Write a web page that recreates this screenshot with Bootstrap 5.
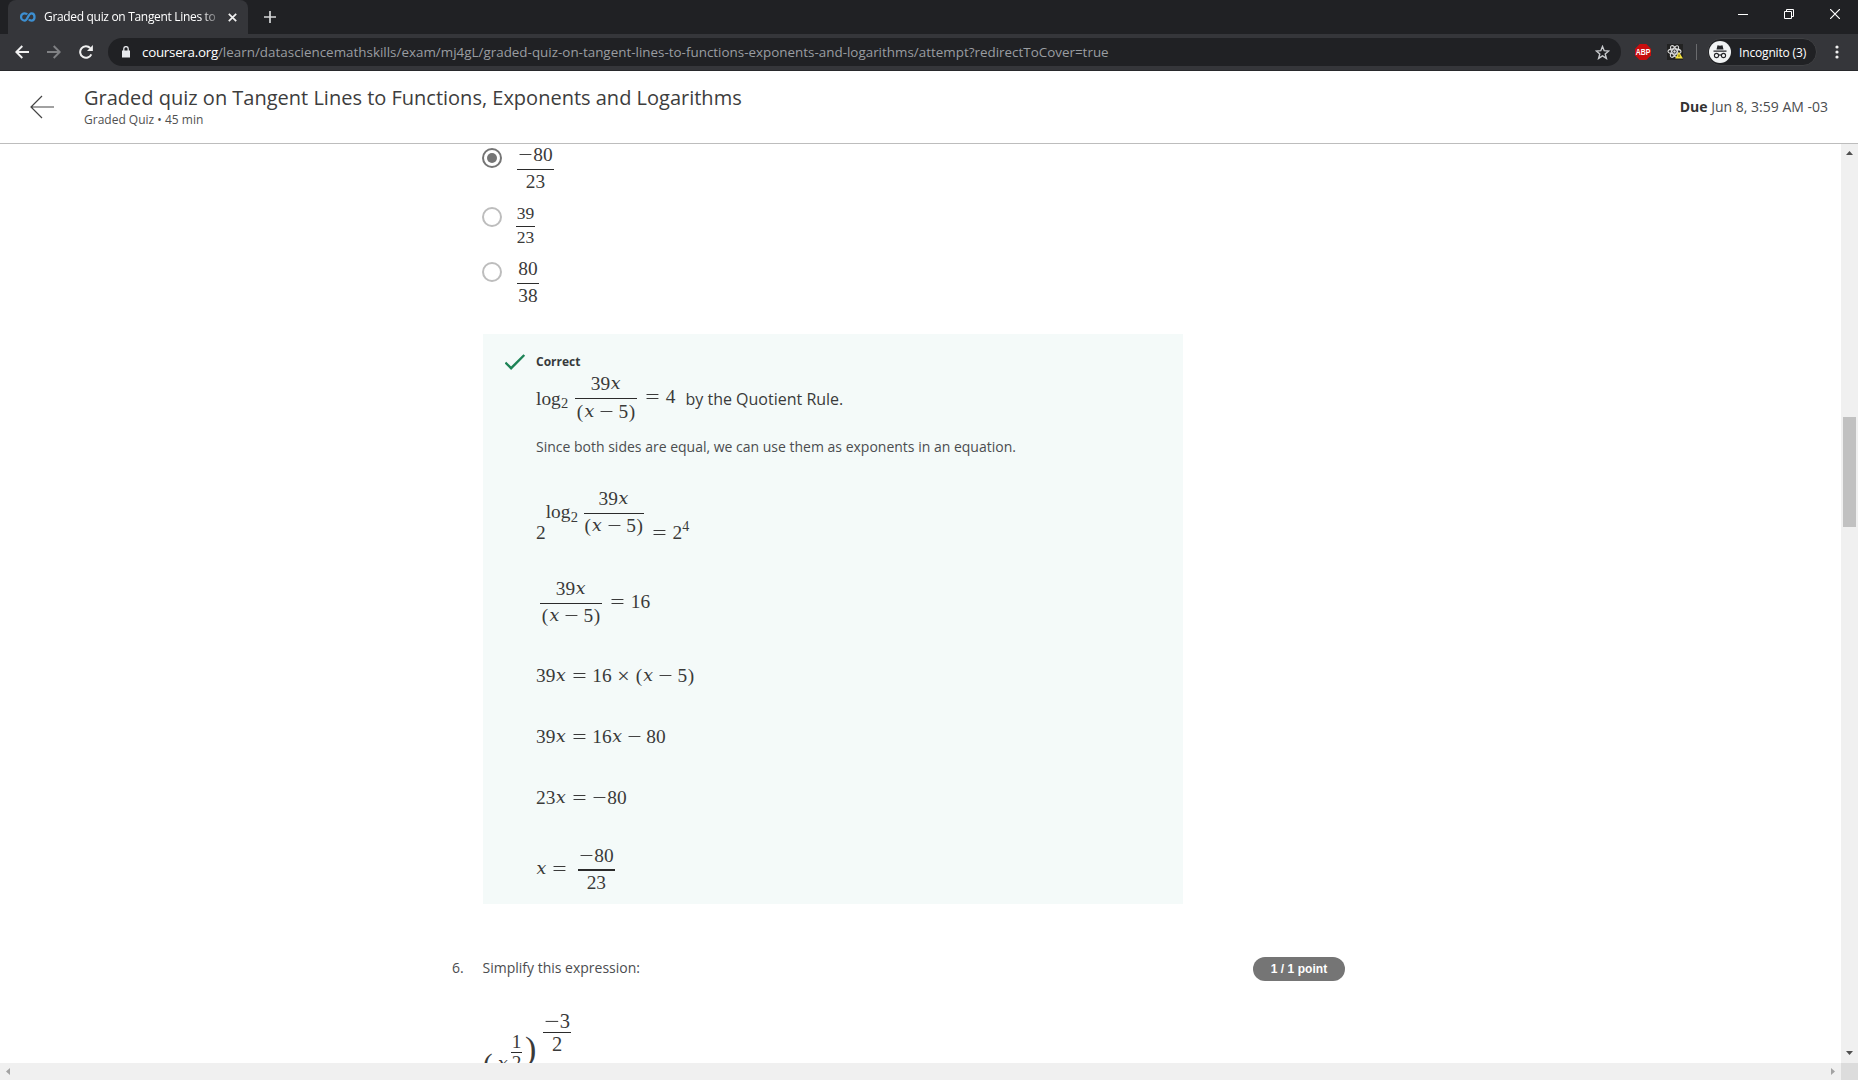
<!DOCTYPE html>
<html lang="en">
<head>
<meta charset="utf-8">
<title>Graded quiz on Tangent Lines to Functions, Exponents and Logarithms</title>
<link href="https://cdn.jsdelivr.net/npm/bootstrap@5.3.0/dist/css/bootstrap.min.css" rel="stylesheet">
<style>
body{font-family:"Open Sans",sans-serif;font-size:14px;line-height:19px;color:#4b4d4f;width:1858px;height:1080px;overflow:hidden;background:#fff}
svg{display:block;flex:none}
.nw{white-space:nowrap}
/* browser frame */
.tabstrip{height:34px;background:#202124;padding-left:8px}
.tab-on{width:240px;height:34px;background:#35363a;border-radius:8px 8px 0 0;padding-left:12px}
.tab-name{width:173px;margin-left:8px;margin-top:-1px;font-size:12px;letter-spacing:-.32px;color:#fff;overflow:hidden;-webkit-mask-image:linear-gradient(90deg,#000 158px,transparent 178px)}
.tab-x{margin-left:11px}
.new-tab{margin-left:16px}
.win-btns{height:28px;gap:36px;padding-right:18px}
.toolbar{height:37px;background:#35363a;padding:4px 0 4px 15px;border-bottom:1px solid #28292c}
.nav-ic{margin-left:18px}
.omni{width:1513px;height:28px;border-radius:14px;background:#202124;margin-left:15px;padding:0 11px 0 14px}
.url{font-size:13.4px;color:#9a9da1;margin-left:12px;letter-spacing:.01px}
.url b{font-weight:400;color:#fff;letter-spacing:-.28px}
.abp{width:16px;height:16px;margin-left:14px}
.tool-sep{width:1px;height:16px;background:#6a6b6e;margin-left:13px}
.incog{width:110px;height:28px;border-radius:14px;background:#202124;border:1px solid #3f4043;margin-left:10px;padding-left:1px;color:#fff;font-size:12px;letter-spacing:-.16px}
/* page header */
.quiz-head{height:73px;border-bottom:1px solid #bdbdbd;padding:0 30px}
.quiz-names{margin-left:29px;margin-top:-3px}
.quiz-title{font-size:20px;line-height:27px;margin:0;font-weight:400;color:#3d3d3d}
.quiz-meta{font-size:12px;line-height:17px;color:#505050}
.due{margin-top:-2px}
.due b{color:#333}
/* scrolled pane */
.pane{height:919px;overflow:hidden}
.col-main{width:893px;margin-left:452px}
.opts{padding-left:30px}
.opt{height:60px}
.opt.o2{height:54px}
.opt.o3{height:76px}
.dot{width:20px;height:20px;border:2px solid #bdbdbd;border-radius:50%;margin:3px 15px 0 0;flex:none}
.o1 .dot,.o3 .dot{margin-top:4px}
.dot.on{border-color:#757575;padding:3px}
.dot.on::before{content:"";display:block;width:10px;height:10px;border-radius:50%;background:#757575}
.feedback{width:700px;height:570px;margin-left:31px;background:#f4faf9;padding:19px 0 0 22px}
.feedback .tick{width:31px;padding-top:1px}
.verdict{font-size:12px;line-height:17px;font-weight:700;color:#373a3c}
/* math */
.fx{font-family:"Liberation Serif",serif;font-size:19.36px;line-height:21px;color:#3a3a3a;display:flex;align-items:flex-start;white-space:nowrap}
.fx span,.fx i{display:inline-block;flex:none}
.fx i{font-family:"DejaVu Serif",serif;font-size:.9em;width:.635em;line-height:inherit;text-align:center}
.fx .rel,.fx .bin,.fx .neg{width:.778em;text-align:center;transform:scaleX(1.32)}
.fx .rel{margin:0 .278em}
.fx .bin{margin:0 .222em}
.fx .tms{transform:none;font-size:22px;width:.685em;margin:0 .195em}
.fx .par{width:.389em;text-align:center}
.fx .fr{display:flex;flex-direction:column;align-items:center;--a:4px;--b:2px}
.fx .fr>span{display:flex}
.fx .fr::before{content:"";order:2;align-self:stretch;border-top:var(--w,1px) solid #2b2b2b;margin:var(--a) 0 var(--b)}
.fx .fr>span:first-child{order:1}
.fx .fr>span:last-child{order:3}
.fx .sub{font-size:14.5px;line-height:15px}
.fx .sup{font-size:14px;line-height:15px}
.opt .fr{--a:3px;--b:1px}
.o1 .fr{--a:4px}
.o3 .fr{--a:4px}
.f80{width:37px}
.o2 .fx{font-size:17.5px;line-height:19px;margin-left:-1px}
.f39{width:19px}.f38{width:22px}
.ra{height:67px}
.ra .lg{margin-top:18px;width:25px}.ra .sub{margin-top:26px;width:7px}
.ra .fr{margin:3px 2px 0 7px;width:62px}
.ra .eq{margin:16px 0 0 1px}
.ra .txt{font:16px/22px "Open Sans",sans-serif;margin:18px 0 0 10px}
.rb{height:112px}
.rb .base{margin-top:66px}.rb .lg{margin:45px 0 0;width:25px}.rb .sub{margin:54px 6px 0 0;width:7px}
.rb .fr{margin-top:32px;width:60px;--b:1px}
.rb .eq{margin-left:3px}
.rb .sup{margin-top:63px}
.rc{height:97px}
.rc .fr{margin:10px 2px 0 4px;width:62px;--b:1px}
.rc .eq{margin:23px 0 0 1px}
.rd{height:61px}.rf{height:58px}
.rg{height:59px}
.rg .lead-x{margin-top:13px}
.rg .fr{margin-left:5px;width:37px;--a:3px;--b:1px;--w:2px}
.q6{padding-top:53px}
.q6 .qn{width:30.500px;padding-top:1px}
.q6 .qt{padding-top:1px}
.pts{width:92px;height:24px;border-radius:12px;background:#757575;color:#fff;text-align:center;letter-spacing:.05px;font:700 12px/24px "Liberation Sans",sans-serif}
.r6{margin-left:31px;height:90px}
.r6 .p1{font-size:29px;line-height:32px;margin-top:67px;width:10px}
.r6 .bx{margin:72px 0 0 3px;width:14px}
.r6 .half{margin-top:50px;width:11px;--a:0px;--b:0px;margin-left:1px}
.r6 .half>span:last-child{margin-top:-1px}
.r6 .p2{font-size:34px;line-height:38px;margin:49px 0 0 3px;width:12px}
.r6 .ex{font-size:20.5px;line-height:22px;margin:29px 0 0 6px;width:28px;--a:0px;--b:0px}
.vbar{width:17px;height:919px;background:#f0f0f0;padding:7px 0 8px}
.vthumb{width:13px;height:110px;margin:262px auto 0;background:#c1c1c1}
.hbar{height:17px;background:#f0f0f0}
.hbar svg{margin:0 6px}
.corner{width:17px;height:17px;background:#dcdcdc}
</style>
</head>
<body>
<!-- tab strip -->
<div class="tabstrip d-flex align-items-center">
  <div class="tab-on d-flex align-items-center">
    <svg width="16" height="10" viewBox="0 0 16 10" fill="none" stroke="#3d8fd1" stroke-width="2.3"><path d="M7.2 2.4C6.5 1.5 5.6 1.3 4.7 1.3a3.6 3.6 0 0 0 0 7.3c2.9 0 3.4-7.3 6.8-7.3 4 0 4 7.3 0 7.3-1 0-2-.4-2.600-1.300"/></svg>
    <div class="tab-name nw">Graded quiz on Tangent Lines to</div>
    <svg class="tab-x" width="9" height="9" viewBox="0 0 9 9" stroke="#f1f1f1" stroke-width="1.7"><path d="M.8.8l7.400 7.400M8.200.8L.8 8.200"/></svg>
  </div>
  <svg class="new-tab" width="12" height="12" viewBox="0 0 12 12" stroke="#d5d6d8" stroke-width="1.7"><path d="M6 0v12M0 6h12"/></svg>
  <div class="win-btns d-flex ms-auto align-items-center align-self-start">
    <svg width="10" height="10" viewBox="0 0 10 10" stroke="#fff"><path d="M0 5.500h10"/></svg>
    <svg width="10" height="10" viewBox="0 0 10 10" fill="none" stroke="#fff"><path d="M.5 2.500h7v7h-7zM2.500 2.500v-2h7v7h-2"/></svg>
    <svg width="10" height="10" viewBox="0 0 10 10" stroke="#fff" stroke-width="1.200"><path d="M0 0l10 10M10 0L0 10"/></svg>
  </div>
</div>
<!-- toolbar -->
<div class="toolbar d-flex align-items-center">
  <svg width="14" height="14" viewBox="0 0 14 14" fill="none" stroke="#f1f1f1" stroke-width="1.900"><path d="M14 7H1.500M7.300 1L1.300 7l6 6"/></svg>
  <svg class="nav-ic" width="14" height="14" viewBox="0 0 14 14" fill="none" stroke="#808184" stroke-width="1.900"><path d="M0 7h12.500M6.700 1l6 6-6 6"/></svg>
  <svg class="nav-ic" width="14" height="14" viewBox="0 0 14 14" fill="none" stroke="#f1f1f1" stroke-width="2"><path d="M12.300 9.300A5.800 5.800 0 1 1 11.200 3"/><path d="M13.900 0v6H8z" fill="#f1f1f1" stroke="none"/></svg>
  <div class="omni d-flex align-items-center">
    <svg width="8" height="12" viewBox="0 0 8 12"><path d="M0 4.500h8v7H0z" fill="#e8eaed"/><path d="M1.800 5V2.800a2.200 2.200 0 0 1 4.400 0V5" fill="none" stroke="#e8eaed" stroke-width="1.300"/></svg>
    <div class="url nw"><b>coursera.org</b>/learn/datasciencemathskills/exam/mj4gL/graded-quiz-on-tangent-lines-to-functions-exponents-and-logarithms/attempt?redirectToCover=true</div>
    <svg class="ms-auto" width="15" height="15" viewBox="0 0 15 15" fill="none" stroke="#c9cbce" stroke-width="1.400"><path d="M7.500 1.500l1.700 4.200 4.500.3-3.500 2.900 1.200 4.500-3.900-2.500-3.900 2.500 1.200-4.500L1.300 6l4.500-.3z"/></svg>
  </div>
  <svg class="abp" viewBox="0 0 16 16"><path d="M4.700 0h6.600L16 4.700v6.600L11.300 16H4.700L0 11.300V4.700z" fill="#c70d0e"/><text x="8" y="11" text-anchor="middle" textLength="14.500" lengthAdjust="spacingAndGlyphs" font-family="Liberation Sans" font-weight="700" font-size="8.500" fill="#fff">ABP</text></svg>
  <svg class="ms-3" width="16" height="16" viewBox="0 0 16 16"><path d="M0 0h16v16H0z" fill="#222"/><g fill="none" stroke="#ddd" stroke-width="1.100"><ellipse cx="7.500" cy="7.500" rx="6.500" ry="2.600"/><ellipse cx="7.500" cy="7.500" rx="6.500" ry="2.600" transform="rotate(60 7.500 7.500)"/><ellipse cx="7.500" cy="7.500" rx="6.500" ry="2.600" transform="rotate(120 7.500 7.500)"/></g><circle cx="7.500" cy="7.500" r="1.200" fill="#ddd"/><path d="M12 8l4 6.500H8.200z" fill="#f4e23c"/><path d="M12 10.500v2.500" stroke="#6b5a00"/></svg>
  <div class="tool-sep"></div>
  <div class="incog d-flex align-items-center">
    <svg width="22" height="22" viewBox="0 0 22 22"><circle cx="11" cy="11" r="11" fill="#f1f3f4"/><path d="M7.500 8.500l1-4.300 2.500.5 2.500-.5 1 4.300zM4.500 9.500h13v1.200h-13z" fill="#25262a"/><g fill="none" stroke="#25262a" stroke-width="1.100"><circle cx="7.500" cy="14.500" r="2.100"/><circle cx="14.500" cy="14.500" r="2.100"/><path d="M9.600 14.200q1.400-.7 2.800 0"/></g></svg>
    <span class="nw ms-2">Incognito (3)</span>
  </div>
  <svg class="nav-ic" width="4" height="14" viewBox="0 0 4 14" fill="#f1f1f1"><circle cx="2" cy="2" r="1.600"/><circle cx="2" cy="7" r="1.600"/><circle cx="2" cy="12" r="1.600"/></svg>
</div>
<!-- quiz header -->
<header class="quiz-head d-flex align-items-center">
  <svg width="25" height="24" viewBox="0 0 25 24" fill="none" stroke="#444" stroke-width="1.200"><path d="M24 12H1M12 1L1 12l11 11"/></svg>
  <div class="quiz-names">
    <h1 class="quiz-title nw">Graded quiz on Tangent Lines to Functions, Exponents and Logarithms</h1>
    <div class="quiz-meta">Graded Quiz • 45 min</div>
  </div>
  <div class="due ms-auto nw"><b>Due</b> Jun 8, 3:59 AM -03</div>
</header>
<!-- content and vertical scrollbar -->
<div class="d-flex">
  <main class="pane flex-grow-1">
    <div class="col-main">
      <div class="opts">
        <div class="opt o1 d-flex align-items-start"><div class="dot on"></div>
          <div class="fx"><span class="fr f80"><span><span class="neg">−</span>80</span><span>23</span></span></div></div>
        <div class="opt o2 d-flex align-items-start"><div class="dot"></div>
          <div class="fx"><span class="fr f39"><span>39</span><span>23</span></span></div></div>
        <div class="opt o3 d-flex align-items-start"><div class="dot"></div>
          <div class="fx"><span class="fr f38"><span>80</span><span>38</span></span></div></div>
      </div>
      <section class="feedback d-flex">
        <div class="tick"><svg width="21" height="16" viewBox="0 0 21 16" fill="none" stroke="#1d8356" stroke-width="2.400"><path d="M.4 8.500l5.700 5.700L19.300 1"/></svg></div>
        <div>
          <div class="verdict">Correct</div>
          <div class="fx ra"><span class="lg">log</span><span class="sub">2</span><span class="fr"><span>39<i>x</i></span><span><span class="par">(</span><i>x</i><span class="bin">−</span>5<span class="par">)</span></span></span><span class="eq"><span class="rel">=</span>4</span><span class="txt">by the Quotient Rule.</span></div>
          <div class="nw">Since both sides are equal, we can use them as exponents in an equation.</div>
          <div class="fx rb"><span class="base">2</span><span class="lg">log</span><span class="sub">2</span><span class="fr"><span>39<i>x</i></span><span><span class="par">(</span><i>x</i><span class="bin">−</span>5<span class="par">)</span></span></span><span class="base eq"><span class="rel">=</span>2</span><span class="sup">4</span></div>
          <div class="fx rc"><span class="fr"><span>39<i>x</i></span><span><span class="par">(</span><i>x</i><span class="bin">−</span>5<span class="par">)</span></span></span><span class="eq"><span class="rel">=</span>16</span></div>
          <div class="fx rd">39<i>x</i><span class="rel">=</span>16<span class="bin tms">×</span><span class="par">(</span><i>x</i><span class="bin">−</span>5<span class="par">)</span></div>
          <div class="fx rd">39<i>x</i><span class="rel">=</span>16<i>x</i><span class="bin">−</span>80</div>
          <div class="fx rf">23<i>x</i><span class="rel">=</span><span class="neg">−</span>80</div>
          <div class="fx rg"><i class="lead-x">x</i><span class="rel lead-x">=</span><span class="fr"><span><span class="neg">−</span>80</span><span>23</span></span></div>
        </div>
      </section>
      <div class="q6 d-flex">
        <div class="qn">6.</div><div class="qt nw">Simplify this expression:</div>
        <div class="pts ms-auto">1 / 1 point</div>
      </div>
      <div class="fx r6"><span class="p1">(</span><i class="bx">x</i><span class="fr half"><span>1</span><span>2</span></span><span class="p2">)</span><span class="fr ex"><span><span class="neg">−</span>3</span><span>2</span></span></div>
    </div>
  </main>
  <div class="vbar d-flex flex-column align-items-center">
    <svg width="7" height="4" viewBox="0 0 7 4" fill="#505050"><path d="M3.500 0L7 4H0z"/></svg>
    <div class="vthumb"></div>
    <svg class="mt-auto" width="7" height="4" viewBox="0 0 7 4" fill="#505050"><path d="M3.500 4L7 0H0z"/></svg>
  </div>
</div>
<!-- horizontal scrollbar -->
<div class="hbar d-flex align-items-center">
  <svg width="4" height="7" viewBox="0 0 4 7" fill="#a3a3a3"><path d="M0 3.500L4 0v7z"/></svg>
  <svg class="ms-auto" width="4" height="7" viewBox="0 0 4 7" fill="#a3a3a3"><path d="M4 3.500L0 0v7z"/></svg>
  <div class="corner"></div>
</div>
<script src="https://cdn.jsdelivr.net/npm/bootstrap@5.3.0/dist/js/bootstrap.bundle.min.js"></script>
</body>
</html>
